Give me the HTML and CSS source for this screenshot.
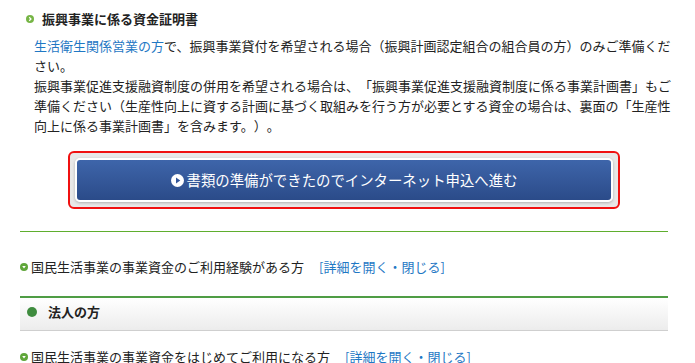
FILE: index.html
```html
<!DOCTYPE html>
<html lang="ja">
<head>
  <meta charset="UTF-8">
  <title>振興事業に係る資金証明書</title>
  <link rel="stylesheet" href="styles.css">
</head>
<body>
  <div class="wrap">
    <section class="doc">
      <h3 class="doc-title">
        <svg class="bullet" width="8" height="8" viewBox="0 0 8 8"><circle cx="4" cy="4" r="4" fill="#76b545"/><path d="M3.2 2.3 L5 4 L3.2 5.7" fill="none" stroke="#fff" stroke-width="1.2"/></svg>
        振興事業に係る資金証明書
      </h3>
      <p class="lead"><a href="#" class="link">生活衛生関係営業の方</a>で、振興事業貸付を希望される場合（振興計画認定組合の組合員の方）のみご準備ください。<br>振興事業促進支援融資制度の併用を希望される場合は、「振興事業促進支援融資制度に係る事業計画書」もご準備ください（生産性向上に資する計画に基づく取組みを行う方が必要とする資金の場合は、裏面の「生産性向上に係る事業計画書」を含みます。）。</p>
    </section>

    <div class="btn-area">
      <div class="btn-frame">
        <a href="#" class="btn">
          <svg class="play" width="13" height="13" viewBox="0 0 13 13"><circle cx="6.5" cy="6.5" r="6.5" fill="#fff"/><path d="M5 3.5 L9.3 6.5 L5 9.5 Z" fill="#34569a"/></svg>
          書類の準備ができたのでインターネット申込へ進む
        </a>
      </div>
    </div>

    <div class="rule"></div>

    <p class="item">
      <svg class="ico" width="8" height="8" viewBox="0 0 8 8"><circle cx="4" cy="4" r="4" fill="#5fa63a"/><path d="M2.2 3 L5.8 3 L4 5.6 Z" fill="#fff"/></svg>
      国民生活事業の事業資金のご利用経験がある方<a href="#" class="link toggle">[詳細を開く・閉じる]</a>
    </p>

    <h2 class="group">
      <span class="dot"></span>法人の方
    </h2>

    <p class="item">
      <svg class="ico" width="8" height="8" viewBox="0 0 8 8"><circle cx="4" cy="4" r="4" fill="#5fa63a"/><path d="M2.2 3 L5.8 3 L4 5.6 Z" fill="#fff"/></svg>
      国民生活事業の事業資金をはじめてご利用になる方<a href="#" class="link toggle">[詳細を開く・閉じる]</a>
    </p>
  </div>
</body>
</html>
```

FILE: styles.css
```css
body {
  margin: 0;
  background: #fff;
  color: #222;
  font-family: "Noto Sans CJK JP", "DejaVu Sans", sans-serif;
  font-size: 13px;
  line-height: 20px;
  text-spacing-trim: space-all;
}

.wrap {
  width: 648px;
  margin-left: 20px;
}

.link {
  color: #1f78c4;
  text-decoration: none;
}

/* document block */
.doc-title {
  display: flex;
  align-items: center;
  gap: 8px;
  margin: 9px 0 0 6px;
  font-size: 13px;
  font-weight: bold;
  line-height: 20px;
}

.lead {
  width: 642px;
  margin: 7px 0 0 14px;
}

/* button */
.btn-area {
  display: flex;
  justify-content: center;
  margin-top: 15px;
}

.btn-frame {
  width: 538px;
  padding: 5px;
  background: #e8e8e8;
  border: 2px solid #f01010;
  border-radius: 6px;
}

.btn {
  display: flex;
  align-items: center;
  justify-content: center;
  gap: 3px;
  height: 40px;
  background: linear-gradient(#3e65aa, #2b4b89);
  border: 2px solid #fff;
  border-radius: 5px;
  box-shadow: 0 1px 3px rgba(0, 0, 0, 0.25);
  color: #fff;
  font-size: 14.4px;
  text-decoration: none;
}

.rule {
  height: 1px;
  margin-top: 22px;
  background: #5fae2e;
}

/* list items */
.item {
  display: flex;
  align-items: center;
  gap: 3px;
  margin: 25px 0 0 0;
}

.toggle {
  margin-left: 12px;
}

.group {
  display: flex;
  align-items: center;
  gap: 11px;
  margin: 19px 0 0 0;
  padding: 4px 0 8px 7px;
  border-top: 2px solid #4f9d45;
  border-bottom: 1px solid #cfcfcf;
  background: linear-gradient(#fff, #ececec);
  font-size: 13px;
  font-weight: bold;
  line-height: 20px;
}

.dot {
  width: 10px;
  height: 10px;
  border-radius: 50%;
  background: #3f8c3f;
}

.group + .item {
  margin-top: 16px;
}
```
